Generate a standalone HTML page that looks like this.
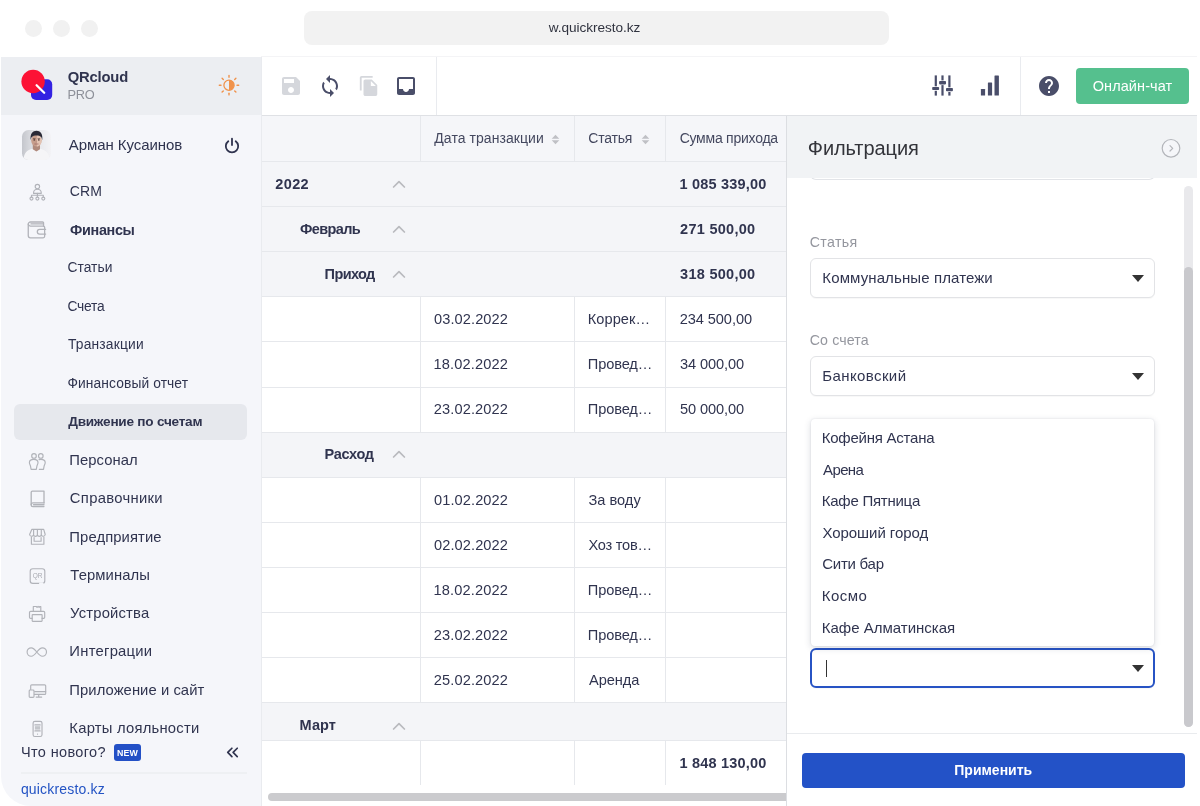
<!DOCTYPE html>
<html lang="ru">
<head>
<meta charset="utf-8">
<title>QRcloud — Движение по счетам</title>
<style>
*{box-sizing:border-box;margin:0;padding:0}
html,body{width:1200px;height:806px;overflow:hidden;background:#fff}
body{font-family:"Liberation Sans",sans-serif;color:#30344f;position:relative}
.abs{position:absolute}
i{font-style:normal}
#win{will-change:transform;position:absolute;left:1px;top:0;width:1196px;height:806px;border-radius:24px 24px 24px 30px;overflow:hidden;background:#fff}
.dot{position:absolute;top:20px;width:17px;height:17px;border-radius:50%;background:#f1f1f1}
#url{position:absolute;left:303px;top:11px;width:585px;height:34px;border-radius:8px;background:#f2f2f2}
#url span{position:absolute;left:244.800px;top:0;font-size:13.6px;line-height:33.4px;color:#30333f;white-space:nowrap}
#side{position:absolute;left:0;top:57px;width:261px;z-index:6;height:749px;background:#f5f6fa;border-right:1px solid #e9ebef}
#brand{position:absolute;left:0;top:0;width:260px;height:58px;background:#eceef2}
.nav{position:absolute;left:69.6px;font-size:15px;line-height:20px;white-space:nowrap;color:#30344f}
.sub{position:absolute;left:67.2px;font-size:13.5px;line-height:20px;white-space:nowrap;color:#30344f}
.b{font-weight:bold}
.ico{position:absolute}
.ico svg{display:block}
#bar{position:absolute;left:260px;top:56px;width:937px;height:60px;background:#fff;border-top:1px solid #f4f4f6;border-bottom:1px solid #dfe1e5;z-index:5}
.vd{position:absolute;top:0;width:1px;height:58px;background:#e9ebef}
#tbl{position:absolute;left:260px;top:115px;width:527px;height:691px;background:#fff;overflow:hidden}
.row{position:absolute;left:0;width:527px;border-bottom:1px solid #e6e8ec;background:#fff}
.grp{background:#f4f5f8}
.hd{background:#f5f6f9}
.c{position:absolute;top:0;height:100%;width:1px;background:#e6e8ec}
.t{position:absolute;white-space:nowrap;font-size:14.5px;line-height:20px;color:#30344f}
.t.h{color:#44485f}
#flt{position:absolute;left:785px;top:115px;width:412px;height:691px;background:#fff;border-left:1px solid #dcdee2}
#fh{position:absolute;left:0;top:0;width:411px;height:63px;background:#f1f3f5;z-index:2}
.lbl{position:absolute;left:23.4px;font-size:14.2px;line-height:18px;color:#94969e;white-space:nowrap}
.sel{position:absolute;left:23px;width:344.5px;height:40px;border:1px solid #e2e3e6;border-radius:6px;background:#fff;box-shadow:0 1px 1px rgba(0,0,0,.03);font-size:15px;line-height:37px;padding-left:12.6px;color:#30344f;white-space:nowrap}
.sel.foc{border:2px solid #2753c4;height:40px}
.cur{position:absolute;left:14px;top:10px;width:1px;height:17px;background:#333}
.car{position:absolute;right:10px;top:15.5px;width:0;height:0;border-left:6.5px solid transparent;border-right:6.5px solid transparent;border-top:7px solid #333}
.dd{background:#fff;border-radius:4px;box-shadow:0 2px 7px rgba(30,40,70,.17),0 0 2px rgba(30,40,70,.12)}
.opt{position:absolute;left:12px;font-size:15px;line-height:20px;white-space:nowrap;color:#30344f}
</style>
</head>
<body>
<div id="win">
<div class="dot" style="left:24px"></div>
<div class="dot" style="left:52px"></div>
<div class="dot" style="left:80px"></div>
<div id="url"><span style="letter-spacing:-0.04px;margin-left:-0.00px">w.quickresto.kz</span></div>

<div id="side">
<div id="brand">
  <svg class="abs" style="left:18px;top:10px" width="40" height="40" viewBox="0 0 40 40">
    <rect x="12" y="12.2" width="21.2" height="20.8" rx="5" fill="#3322e2"/>
    <circle cx="14.1" cy="14.5" r="11.7" fill="#fc1235"/>
    <line x1="17.6" y1="18.3" x2="25.2" y2="25.8" stroke="#fff" stroke-width="2.3" stroke-linecap="round"/>
  </svg>
  <div class="abs" style="left:67.300px;top:11px;font-size:14.800px;line-height:18px;font-weight:bold;color:#30344f;white-space:nowrap;letter-spacing:-0.21px;margin-left:-0.50px">QRcloud</div>
  <div class="abs" style="left:67.500px;top:29px;font-size:12.800px;line-height:18px;color:#8d9099;white-space:nowrap;letter-spacing:-0.25px;margin-left:-1.00px">PRO</div>
  <svg class="abs" style="left:215px;top:15px" width="26" height="26" viewBox="0 0 26 26" fill="none" stroke="#f0934d" stroke-linecap="round">
    <circle cx="13" cy="13.2" r="5.1" stroke-width="1.3"/>
    <path d="M13 8.1a5.1 5.1 0 0 1 0 10.2z" fill="#f0934d" stroke="none"/>
    <g stroke-width="1.400">
      <line x1="13" y1="3.500" x2="13" y2="5.200"/><line x1="13" y1="21.200" x2="13" y2="22.900"/>
      <line x1="3.300" y1="13.200" x2="5" y2="13.200"/><line x1="21" y1="13.200" x2="22.700" y2="13.200"/>
      <line x1="6.100" y1="6.300" x2="7.300" y2="7.500"/><line x1="18.700" y1="18.900" x2="19.900" y2="20.100"/>
      <line x1="6.100" y1="20.100" x2="7.300" y2="18.900"/><line x1="18.700" y1="7.500" x2="19.900" y2="6.300"/>
    </g>
  </svg>
</div>
<div class="abs" style="left:21px;top:72.500px;width:29px;height:30px;border-radius:6.500px;overflow:hidden;background:linear-gradient(90deg,#c4c6cc 0%,#e4e5e9 45%,#f3f3f6 100%)"><svg style="display:block;margin-top:-.5px" width="29" height="31" viewBox="0 0 29 31">
  <g>
    <path d="M1.500 31c.3-6.500 3-9.800 8.500-11.300l4.300 1.800 4.300-1.800c5.500 1.500 8.700 4.800 9 11.300z" fill="#f5f5f7"/>
    <path d="M10.800 15h7.200v5.300l-3.600 2.300-3.600-2.300z" fill="#b08a7c"/>
    <ellipse cx="14.400" cy="11.600" rx="5.200" ry="6" fill="#c79e8c"/>
    <path d="M14.800 5.600c2.700 0 4.800 2.700 4.800 6s-2.100 6-4.800 6z" fill="#e3c2b1"/>
    <path d="M8.700 11.200c-.9-6.400 2.200-9.400 5.800-9.400s6.600 3 5.700 9.400c-.5-3.100-1.500-4.600-5.700-4.600s-5.300 1.500-5.800 4.600z" fill="#2a2a36"/>
    <ellipse cx="12.300" cy="10.900" rx=".9" ry=".55" fill="#3b2a28"/><ellipse cx="16.800" cy="10.900" rx=".9" ry=".55" fill="#3b2a28"/>
    <path d="M11 9.700h2.500M15.600 9.700h2.500" stroke="#3b2a28" stroke-width=".6"/>
    <path d="M12.800 15h3.300" stroke="#a06a62" stroke-width=".8" stroke-linecap="round"/>
    <path d="M14.300 11.500v2.200" stroke="#b58d7d" stroke-width=".7"/>
  </g>
</svg></div>
<div class="abs" style="left:67.700px;top:78px;font-size:15px;line-height:20px;color:#30344f;white-space:nowrap;letter-spacing:-0.06px;margin-left:-0.00px">Арман Кусаинов</div>
<svg class="abs" style="left:219.700px;top:77.600px" width="22" height="22" viewBox="0 0 22 22" fill="none" stroke="#30344f" stroke-width="1.800" stroke-linecap="round">
  <path d="M7.300 6.200a6.200 6.200 0 1 0 7.400 0"/><line x1="11" y1="3.700" x2="11" y2="10"/>
</svg>
<div class="abs" style="left:13px;top:347px;width:233px;height:36px;border-radius:6px;background:#e6e8ed"></div>
<div class="nav" style="top:124.3px;font-size:14px;letter-spacing:0.10px;margin-left:-0.75px">CRM</div>
<div class="nav b" style="top:163.4px;font-size:14.4px;letter-spacing:-0.34px;margin-left:-0.50px">Финансы</div>
<div class="sub" style="top:201.1px;font-size:13.8px;letter-spacing:0.04px;margin-left:-0.75px">Статьи</div>
<div class="sub" style="top:239.8px;font-size:13.8px;letter-spacing:-0.19px;margin-left:-0.75px">Счета</div>
<div class="sub" style="top:278.1px;font-size:13.8px;letter-spacing:0.19px;margin-left:-0.25px">Транзакции</div>
<div class="sub" style="top:316.6px;font-size:13.8px;letter-spacing:0.10px;margin-left:-0.75px">Финансовый отчет</div>
<div class="sub b" style="top:354.9px;font-size:13.6px;letter-spacing:-0.24px;margin-left:-0.00px">Движение по счетам</div>
<div class="nav" style="top:392.7px;font-size:14.8px;letter-spacing:0.04px;margin-left:-1.25px">Персонал</div>
<div class="nav" style="top:431.2px;font-size:14.8px;letter-spacing:0.30px;margin-left:-0.75px">Справочники</div>
<div class="nav" style="top:469.5px;font-size:14.8px;letter-spacing:0.10px;margin-left:-1.25px">Предприятие</div>
<div class="nav" style="top:507.7px;font-size:14.8px;letter-spacing:0.09px;margin-left:-0.25px">Терминалы</div>
<div class="nav" style="top:545.8px;font-size:14.8px;letter-spacing:0.18px;margin-left:-0.50px">Устройства</div>
<div class="nav" style="top:584.4px;font-size:14.8px;letter-spacing:0.25px;margin-left:-1.25px">Интеграции</div>
<div class="nav" style="top:622.8px;font-size:14.8px;letter-spacing:0.06px;margin-left:-1.25px">Приложение и сайт</div>
<div class="nav" style="top:661.1px;font-size:14.8px;letter-spacing:0.22px;margin-left:-1.25px">Карты лояльности</div>
<div class="ico" style="left:25px;top:123.0px;width:22px;height:22px"><svg width="22" height="22" viewBox="0 0 22 22" fill="none" stroke="#b1b3b9" stroke-width="1.150" stroke-linecap="round" stroke-linejoin="round"><circle cx="11.400" cy="6.500" r="2.200"/><path d="M7.600 13.400v-.9a3.800 3.300 0 0 1 7.600 0v.9z"/><path d="M11.400 13.400v3M5.500 17v-1.800h11.800V17"/><circle cx="5.500" cy="18.600" r="1.500"/><circle cx="11.400" cy="18.600" r="1.500"/><circle cx="17.300" cy="18.600" r="1.500"/></svg></div>
<div class="ico" style="left:25px;top:161.4px;width:22px;height:22px"><svg width="22" height="22" viewBox="0 0 22 22" fill="none" stroke="#b1b3b9" stroke-width="1.150" stroke-linecap="round" stroke-linejoin="round"><g stroke-width="1.300"><path d="M2.250 6.200a2.200 2.200 0 0 1 2.200-2.200h12.200a.9.900 0 0 1 .9.900v3.100"/><path d="M2.250 6.200v11.400a2.200 2.200 0 0 0 2.200 2.200h12.700a1.500 1.500 0 0 0 1.500-1.500V9.550a1.500 1.500 0 0 0-1.500-1.500H4.450a2.200 2.200 0 0 1-2.200-1.850"/><path d="M5 5.950h11.800"/><path d="M19.600 11.350h-5.950a2.350 2.350 0 0 0 0 4.700h5.950"/></g></svg></div>
<div class="ico" style="left:25px;top:391.5px;width:22px;height:22px"><svg width="22" height="22" viewBox="0 0 22 22" fill="none" stroke="#b1b3b9" stroke-width="1.150" stroke-linecap="round" stroke-linejoin="round"><circle cx="8" cy="6.900" r="2.300"/><circle cx="14.800" cy="6.900" r="2.300"/><path d="M3.400 13.500c0-2 1.500-3.200 4.300-3.200s4.300 1.200 4.300 3.200c0 1.600-.8 2.300-1.100 3.600l-.6 3.200H5.100l-.6-3.200c-.3-1.300-1.100-2-1.100-3.600z"/><path d="M13.100 10.600c.5-.2 1.100-.3 1.800-.3 2.800 0 4.300 1.200 4.300 3.200 0 1.600-.8 2.300-1.100 3.600l-.6 3.200h-4.200"/></svg></div>
<div class="ico" style="left:25px;top:429.9px;width:22px;height:22px"><svg width="22" height="22" viewBox="0 0 22 22" fill="none" stroke="#b1b3b9" stroke-width="1.150" stroke-linecap="round" stroke-linejoin="round"><g stroke-width="1.300"><path d="M5.200 17.500V5.300a1.200 1.200 0 0 1 1.200-1.200H18v11.800"/><path d="M18 15.900H7a1.850 1.850 0 0 0 0 3.700h11"/><path d="M7.500 17.750H18"/></g></svg></div>
<div class="ico" style="left:25px;top:468.2px;width:22px;height:22px"><svg width="22" height="22" viewBox="0 0 22 22" fill="none" stroke="#b1b3b9" stroke-width="1.150" stroke-linecap="round" stroke-linejoin="round"><path d="M5.600 4.300h11.800l1.500 5.200a2 2 0 0 1-3.900.3 2 2 0 0 1-3.900 0 2 2 0 0 1-3.900 0 2 2 0 0 1-3.900-.300z" transform="translate(0.300,0)"/><path d="M7.600 4.500v5M11.400 4.500v5M15.300 4.500v5"/><path d="M5.400 12v7.200h12.500V12"/><path d="M8.100 12.500v3.700h7v-3.700"/></svg></div>
<div class="ico" style="left:25px;top:506.6px;width:22px;height:22px"><svg width="22" height="22" viewBox="0 0 22 22" fill="none" stroke="#b1b3b9" stroke-width="1.150" stroke-linecap="round" stroke-linejoin="round"><rect x="4.200" y="4.700" width="14.600" height="14.600" rx="2.600"/><text x="11.500" y="14.400" font-family="Liberation Sans, sans-serif" font-size="6.500" text-anchor="middle" fill="#a9abb2" stroke="none">QR</text><path d="M14 19.400h2.600" stroke="#f5f6fa" stroke-width="2"/></svg></div>
<div class="ico" style="left:25px;top:545.0px;width:22px;height:22px"><svg width="22" height="22" viewBox="0 0 22 22" fill="none" stroke="#b1b3b9" stroke-width="1.150" stroke-linecap="round" stroke-linejoin="round"><path d="M7.300 9.300V4.500h3l.8.900 1-1 1 1 .8-.9h.9v4.800"/><path d="M6.200 16.300H4.600a1.100 1.100 0 0 1-1.100-1.100v-4.700a1.100 1.100 0 0 1 1.100-1.100h13a1.100 1.100 0 0 1 1.100 1.100v4.700a1.100 1.100 0 0 1-1.100 1.100H16"/><rect x="6.200" y="12.600" width="9.900" height="6.700" rx=".5"/></svg></div>
<div class="ico" style="left:25px;top:583.3px;width:22px;height:22px"><svg width="22" height="22" viewBox="0 0 22 22" fill="none" stroke="#b1b3b9" stroke-width="1.150" stroke-linecap="round" stroke-linejoin="round"><path d="M10.800 12c-1.800-2.300-3.300-4.200-5.500-4.200a4.200 4.200 0 0 0 0 8.400c2.200 0 3.700-1.900 5.500-4.200s3.300-4.200 5.500-4.200a4.200 4.200 0 0 1 0 8.400c-2.200 0-3.700-1.900-5.500-4.200z"/></svg></div>
<div class="ico" style="left:25px;top:621.7px;width:22px;height:22px"><svg width="22" height="22" viewBox="0 0 22 22" fill="none" stroke="#b1b3b9" stroke-width="1.150" stroke-linecap="round" stroke-linejoin="round"><g transform="translate(-0.800,1.200)"><path d="M5.500 9.200V5.600a1 1 0 0 1 1-1h13a1 1 0 0 1 1 1v7.600a1 1 0 0 1-1 1H9.300"/><path d="M9.500 11.400h11"/><rect x="4" y="9.800" width="4.800" height="7.400" rx=".9"/><path d="M13.500 14.300v2.200M11 16.900h5.500"/></g></svg></div>
<div class="ico" style="left:25px;top:660.0px;width:22px;height:22px"><svg width="22" height="22" viewBox="0 0 22 22" fill="none" stroke="#b1b3b9" stroke-width="1.150" stroke-linecap="round" stroke-linejoin="round"><g transform="translate(0,0.900)"><rect x="7.100" y="3.400" width="8.900" height="15.200" rx="1.800"/><rect x="8.900" y="8.300" width="5.300" height="3.400" fill="#c4c6cb" stroke="none"/><path d="M8.900 7h5.300M8.900 13h5.300"/><circle cx="11.550" cy="16.200" r=".6" fill="#a9abb2" stroke="none"/></g></svg></div>
<div class="abs" style="left:21px;top:684.600px;font-size:14.500px;line-height:20px;color:#30344f;white-space:nowrap;letter-spacing:0.36px;margin-left:-1.00px">Что нового?</div>
<div class="abs" style="left:113px;top:687.400px;width:27px;height:17px;border-radius:3px;background:#2350c6;color:#fff;font-size:8.800px;line-height:19.500px;overflow:hidden;font-weight:bold;text-align:center;letter-spacing:.2px">NEW</div>
<svg class="abs" style="left:224px;top:688px" width="16" height="14" viewBox="0 0 16 14" fill="none" stroke="#30344f" stroke-width="1.700" stroke-linecap="round" stroke-linejoin="round"><path d="M6.900 3.250 2.750 7.400l4.150 4.150M12.250 3.250 8.100 7.400l4.150 4.150"/></svg>
<div class="abs" style="left:20px;top:715px;width:226px;height:2px;background:#eef0f3"></div>
<div class="abs" style="left:20.400px;top:721.600px;font-size:14px;line-height:20px;color:#2454c4;white-space:nowrap;letter-spacing:0.17px;margin-left:-0.50px">quickresto.kz</div>
</div>

<div id="bar">
<svg class="abs" style="left:18px;top:17px" width="24" height="24" viewBox="0 0 24 24" fill="#d5d7dc"><path d="M17 3H5c-1.110 0-2 .9-2 2v14c0 1.100.890 2 2 2h14c1.100 0 2-.9 2-2V7l-4-4zm-5 16c-1.660 0-3-1.340-3-3s1.340-3 3-3 3 1.340 3 3-1.340 3-3 3zm3-10H5V5h10v4z"/></svg>
<svg class="abs" style="left:57px;top:17px" width="24" height="24" viewBox="0 0 24 24" fill="#4a4e69"><path d="M12 4V1L8 5l4 4V6c3.310 0 6 2.690 6 6 0 1.010-.25 1.970-.7 2.800l1.460 1.460C19.540 15.030 20 13.570 20 12c0-4.420-3.580-8-8-8zm0 14c-3.310 0-6-2.690-6-6 0-1.010.25-1.970.7-2.800L5.240 7.740C4.460 8.970 4 10.430 4 12c0 4.420 3.580 8 8 8v3l4-4-4-4v3z"/></svg>
<svg class="abs" style="left:97px;top:18px" width="22" height="22" viewBox="0 0 24 24" fill="#d5d7dc"><path d="M16 1H4c-1.100 0-2 .9-2 2v14h2V3h12V1zm-1 4l6 6v10c0 1.100-.9 2-2 2H7.990C6.890 23 6 22.100 6 21l.010-14c0-1.100.890-2 1.990-2h7zm-1 7h5.500L14 6.500V12z"/></svg>
<svg class="abs" style="left:133px;top:17px" width="24" height="24" viewBox="0 0 24 24" fill="#4a4e69"><path d="M19 3H4.990c-1.110 0-1.980.890-1.980 2L3 19c0 1.100.880 2 1.990 2H19c1.100 0 2-.9 2-2V5c0-1.110-.9-2-2-2zm0 12h-4c0 1.660-1.350 3-3 3s-3-1.340-3-3H4.990V5H19v10z"/></svg>
<div class="vd" style="left:175px"></div>
<svg class="abs" style="left:669px;top:17px" width="24" height="24" viewBox="0 0 24 24" fill="#4a4e6a"><rect x="4.700" y="1.400" width="2.200" height="10.900"/><rect x="4.700" y="16.800" width="2.200" height="4.800"/><rect x="11.400" y="1.400" width="2.200" height="5"/><rect x="11.400" y="11.100" width="2.200" height="10.500"/><rect x="18.300" y="1.400" width="2.200" height="11.900"/><rect x="18.300" y="18" width="2.200" height="3.600"/><rect x="2.200" y="13" width="6.900" height="3.100" rx=".8"/><rect x="9.100" y="7.100" width="6.900" height="3.300" rx=".8"/><rect x="16" y="14" width="6.900" height="3.300" rx=".8"/></svg>
<svg class="abs" style="left:717px;top:17px" width="24" height="24" viewBox="0 0 24 24" fill="#4a4e6a"><rect x="2.900" y="15.100" width="4.200" height="6.500" rx=".4"/><rect x="9.900" y="8.500" width="4.200" height="13.100" rx=".4"/><rect x="16.500" y="1.600" width="4.400" height="20" rx=".4"/></svg>
<div class="vd" style="left:759px"></div>
<svg class="abs" style="left:776px;top:17px" width="24" height="24" viewBox="0 0 24 24" fill="#4a4e69"><path d="M12 2C6.480 2 2 6.480 2 12s4.480 10 10 10 10-4.480 10-10S17.520 2 12 2zm1 17h-2v-2h2v2zm2.070-7.750l-.9.920C13.450 12.900 13 13.500 13 15h-2v-.5c0-1.100.450-2.100 1.170-2.830l1.240-1.260c.37-.36.590-.86.590-1.410 0-1.100-.9-2-2-2s-2 .9-2 2H8c0-2.210 1.790-4 4-4s4 1.790 4 4c0 .880-.36 1.680-.93 2.250z"/></svg>
<div class="abs" style="left:815px;top:11px;width:113px;height:36px;border-radius:4px;background:#55c08e;color:#fff;font-size:14.500px;line-height:36px;text-align:center;letter-spacing:.1px">Онлайн-чат</div>
</div>

<div id="tbl">
<div class="row hd" style="top:0;height:47px"><div class="c" style="left:159px"></div><div class="c" style="left:313px"></div><div class="c" style="left:404px"></div><div class="t h" style="left:173.30px;top:13.0px;font-size:14px;letter-spacing:0.06px;margin-left:-0.00px">Дата транзакции</div><svg class="abs" style="left:290.3px;top:19px" width="9" height="11" viewBox="0 0 9 11" fill="#bfc0c5"><path d="M4.500 .8 8.300 4.700H.7zM4.500 10.200.7 6.300h7.600z"/></svg><div class="t h" style="left:328.00px;top:13.0px;font-size:14px;letter-spacing:-0.22px;margin-left:-0.75px">Статья</div><svg class="abs" style="left:380.3px;top:19px" width="9" height="11" viewBox="0 0 9 11" fill="#bfc0c5"><path d="M4.500 .8 8.300 4.700H.7zM4.500 10.200.7 6.300h7.600z"/></svg><div class="t h" style="left:419.40px;top:13.0px;font-size:14px;letter-spacing:-0.24px;margin-left:-0.75px">Сумма прихода</div></div>
<div class="row grp" style="top:47px;height:45px"><div class="t b" style="left:14.75px;top:11.9px;font-size:14.5px;letter-spacing:0.38px;margin-left:-0.50px">2022</div><svg class="abs" style="left:130.400px;top:16.7px" width="16" height="10" viewBox="0 0 16 10" fill="none" stroke="#b9babe" stroke-width="1.700" stroke-linecap="round" stroke-linejoin="round"><path d="M2.600 8 8 2.600 13.400 8"/></svg><div class="t b" style="left:419.60px;top:11.9px;font-size:14.5px;letter-spacing:0.18px;margin-left:-1.00px">1 085 339,00</div></div>
<div class="row grp" style="top:92px;height:45px"><div class="t b" style="left:39.60px;top:12.0px;font-size:14.5px;letter-spacing:-0.64px;margin-left:-0.50px">Февраль</div><svg class="abs" style="left:130.400px;top:16.8px" width="16" height="10" viewBox="0 0 16 10" fill="none" stroke="#b9babe" stroke-width="1.700" stroke-linecap="round" stroke-linejoin="round"><path d="M2.600 8 8 2.600 13.400 8"/></svg><div class="t b" style="left:419.60px;top:12.0px;font-size:14.5px;letter-spacing:0.28px;margin-left:-0.50px">271 500,00</div></div>
<div class="row grp" style="top:137px;height:45px"><div class="t b" style="left:64.60px;top:12.1px;font-size:14.5px;letter-spacing:-0.62px;margin-left:-1.00px">Приход</div><svg class="abs" style="left:130.400px;top:16.9px" width="16" height="10" viewBox="0 0 16 10" fill="none" stroke="#b9babe" stroke-width="1.700" stroke-linecap="round" stroke-linejoin="round"><path d="M2.600 8 8 2.600 13.400 8"/></svg><div class="t b" style="left:419.60px;top:12.1px;font-size:14.5px;letter-spacing:0.28px;margin-left:-0.50px">318 500,00</div></div>
<div class="row" style="top:182px;height:45px"><div class="c" style="left:159px"></div><div class="c" style="left:313px"></div><div class="c" style="left:404px"></div><div class="t" style="left:173.60px;top:12.1px;font-size:14.6px;letter-spacing:0.08px;margin-left:-0.50px">03.02.2022</div><div class="t" style="left:328.00px;top:12.1px;font-size:14.6px;letter-spacing:0.06px;margin-left:-1.25px">Коррек…</div><div class="t" style="left:419.40px;top:12.1px;font-size:14.6px;letter-spacing:-0.07px;margin-left:-0.75px">234 500,00</div></div>
<div class="row" style="top:227px;height:46px"><div class="c" style="left:159px"></div><div class="c" style="left:313px"></div><div class="c" style="left:404px"></div><div class="t" style="left:173.60px;top:12.2px;font-size:14.6px;letter-spacing:0.14px;margin-left:-1.00px">18.02.2022</div><div class="t" style="left:328.00px;top:12.2px;font-size:14.6px;letter-spacing:-0.10px;margin-left:-1.25px">Провед…</div><div class="t" style="left:419.40px;top:12.2px;font-size:14.6px;letter-spacing:-0.09px;margin-left:-0.50px">34 000,00</div></div>
<div class="row" style="top:273px;height:45px"><div class="c" style="left:159px"></div><div class="c" style="left:313px"></div><div class="c" style="left:404px"></div><div class="t" style="left:173.60px;top:11.3px;font-size:14.6px;letter-spacing:0.11px;margin-left:-0.75px">23.02.2022</div><div class="t" style="left:328.00px;top:11.3px;font-size:14.6px;letter-spacing:-0.10px;margin-left:-1.25px">Провед…</div><div class="t" style="left:419.40px;top:11.3px;font-size:14.6px;letter-spacing:-0.09px;margin-left:-0.50px">50 000,00</div></div>
<div class="row grp" style="top:318px;height:45px"><div class="t b" style="left:64.60px;top:11.4px;font-size:14.5px;letter-spacing:-0.33px;margin-left:-1.00px">Расход</div><svg class="abs" style="left:130.400px;top:16.2px" width="16" height="10" viewBox="0 0 16 10" fill="none" stroke="#b9babe" stroke-width="1.700" stroke-linecap="round" stroke-linejoin="round"><path d="M2.600 8 8 2.600 13.400 8"/></svg></div>
<div class="row" style="top:363px;height:45px"><div class="c" style="left:159px"></div><div class="c" style="left:313px"></div><div class="c" style="left:404px"></div><div class="t" style="left:173.60px;top:11.5px;font-size:14.6px;letter-spacing:0.08px;margin-left:-0.50px">01.02.2022</div><div class="t" style="left:328.00px;top:11.5px;font-size:14.6px;letter-spacing:0.00px;margin-left:-0.50px">За воду</div></div>
<div class="row" style="top:408px;height:45px"><div class="c" style="left:159px"></div><div class="c" style="left:313px"></div><div class="c" style="left:404px"></div><div class="t" style="left:173.60px;top:11.6px;font-size:14.6px;letter-spacing:0.08px;margin-left:-0.50px">02.02.2022</div><div class="t" style="left:328.00px;top:11.6px;font-size:14.6px;letter-spacing:-0.25px;margin-left:-0.50px">Хоз тов…</div></div>
<div class="row" style="top:453px;height:45px"><div class="c" style="left:159px"></div><div class="c" style="left:313px"></div><div class="c" style="left:404px"></div><div class="t" style="left:173.60px;top:11.7px;font-size:14.6px;letter-spacing:0.14px;margin-left:-1.00px">18.02.2022</div><div class="t" style="left:328.00px;top:11.7px;font-size:14.6px;letter-spacing:-0.10px;margin-left:-1.25px">Провед…</div></div>
<div class="row" style="top:498px;height:45px"><div class="c" style="left:159px"></div><div class="c" style="left:313px"></div><div class="c" style="left:404px"></div><div class="t" style="left:173.60px;top:11.7px;font-size:14.6px;letter-spacing:0.11px;margin-left:-0.75px">23.02.2022</div><div class="t" style="left:328.00px;top:11.7px;font-size:14.6px;letter-spacing:-0.10px;margin-left:-1.25px">Провед…</div></div>
<div class="row" style="top:543px;height:45px"><div class="c" style="left:159px"></div><div class="c" style="left:313px"></div><div class="c" style="left:404px"></div><div class="t" style="left:173.60px;top:11.8px;font-size:14.6px;letter-spacing:0.11px;margin-left:-0.75px">25.02.2022</div><div class="t" style="left:328.00px;top:11.8px;font-size:14.6px;letter-spacing:-0.05px;margin-left:-0.00px">Аренда</div></div>
<div class="row grp" style="top:588px;height:46px"><div class="t b" style="left:39.60px;top:12.0px;font-size:14.5px;letter-spacing:0.08px;margin-left:-1.00px">Март</div><svg class="abs" style="left:130.400px;top:18.0px" width="16" height="10" viewBox="0 0 16 10" fill="none" stroke="#b9babe" stroke-width="1.700" stroke-linecap="round" stroke-linejoin="round"><path d="M2.600 8 8 2.600 13.400 8"/></svg></div>
<div class="row" style="top:625px;height:45px;background:#fff;border-top:1px solid #e6e8ec;border-bottom:none"><div class="c" style="left:159px"></div><div class="c" style="left:313px"></div><div class="c" style="left:404px"></div><div class="t b" style="left:419.60px;top:12.0px;font-size:14.5px;letter-spacing:0.18px;margin-left:-1.00px">1 848 130,00</div></div>
<div class="abs" style="left:7px;top:677.5px;width:540px;height:8px;border-radius:4px;background:#cbcbce"></div>
</div>

<div id="flt">
<div id="fh"><div class="abs" style="left:22px;top:20px;font-size:20px;line-height:26px;color:#33343a;white-space:nowrap;letter-spacing:-0.08px;margin-left:-1.25px">Фильтрация</div>
<svg class="abs" style="left:373px;top:22px" width="22" height="22" viewBox="0 0 22 22" fill="none" stroke="#b4b6bb" stroke-width="1.200" stroke-linecap="round" stroke-linejoin="round"><circle cx="11" cy="11.300" r="8.800" fill="#f5f6f9"/><path d="M10 8.600 12.700 11.300 10 14"/></svg></div>
<div class="abs" style="left:23px;top:55px;width:345px;height:10px;border:1px solid #e2e4e8;border-top:none;border-radius:0 0 6px 6px;background:#fff"></div>
<div class="lbl" style="top:118px;letter-spacing:0.36px;margin-left:-0.75px">Статья</div>
<div class="sel" style="top:143px"><span style="letter-spacing:0.11px;margin-left:-1.25px">Коммунальные платежи</span><i class="car"></i></div>
<div class="lbl" style="top:216px;letter-spacing:0.14px;margin-left:-0.75px">Со счета</div>
<div class="sel" style="top:241px"><span style="letter-spacing:0.39px;margin-left:-1.25px">Банковский</span><i class="car"></i></div>
<div class="sel foc" style="top:533px"><span class="cur"></span><i class="car" style="right:9px;top:15px"></i></div>
<div class="abs dd" style="left:24px;top:304px;width:343px;height:227px"><div class="opt" style="top:9.0px;letter-spacing:-0.24px;margin-left:-1.25px">Кофейня Астана</div><div class="opt" style="top:40.6px;letter-spacing:-0.61px;margin-left:-0.00px">Арена</div><div class="opt" style="top:72.2px;letter-spacing:-0.25px;margin-left:-1.25px">Кафе Пятница</div><div class="opt" style="top:103.8px;letter-spacing:-0.06px;margin-left:-0.50px">Хороший город</div><div class="opt" style="top:135.4px;letter-spacing:-0.26px;margin-left:-0.75px">Сити бар</div><div class="opt" style="top:167.0px;letter-spacing:0.49px;margin-left:-1.25px">Космо</div><div class="opt" style="top:198.6px;letter-spacing:0.00px;margin-left:-1.25px">Кафе Алматинская</div></div>
<div class="abs" style="left:397px;top:71px;width:9px;height:541px;border-radius:5px;background:#e9e9ec"></div>
<div class="abs" style="left:397px;top:152px;width:9px;height:460px;border-radius:5px;background:#c9c9cd"></div>
<div class="abs" style="left:0;top:618px;width:411px;height:1px;background:#e9ebee"></div>
<div class="abs" style="left:14.500px;top:637.500px;width:383.500px;height:35px;border-radius:4px;background:#2352c7;color:#fff;font-weight:bold;font-size:14px;line-height:35px;text-align:center">Применить</div>
</div>
</div>
</body>
</html>
